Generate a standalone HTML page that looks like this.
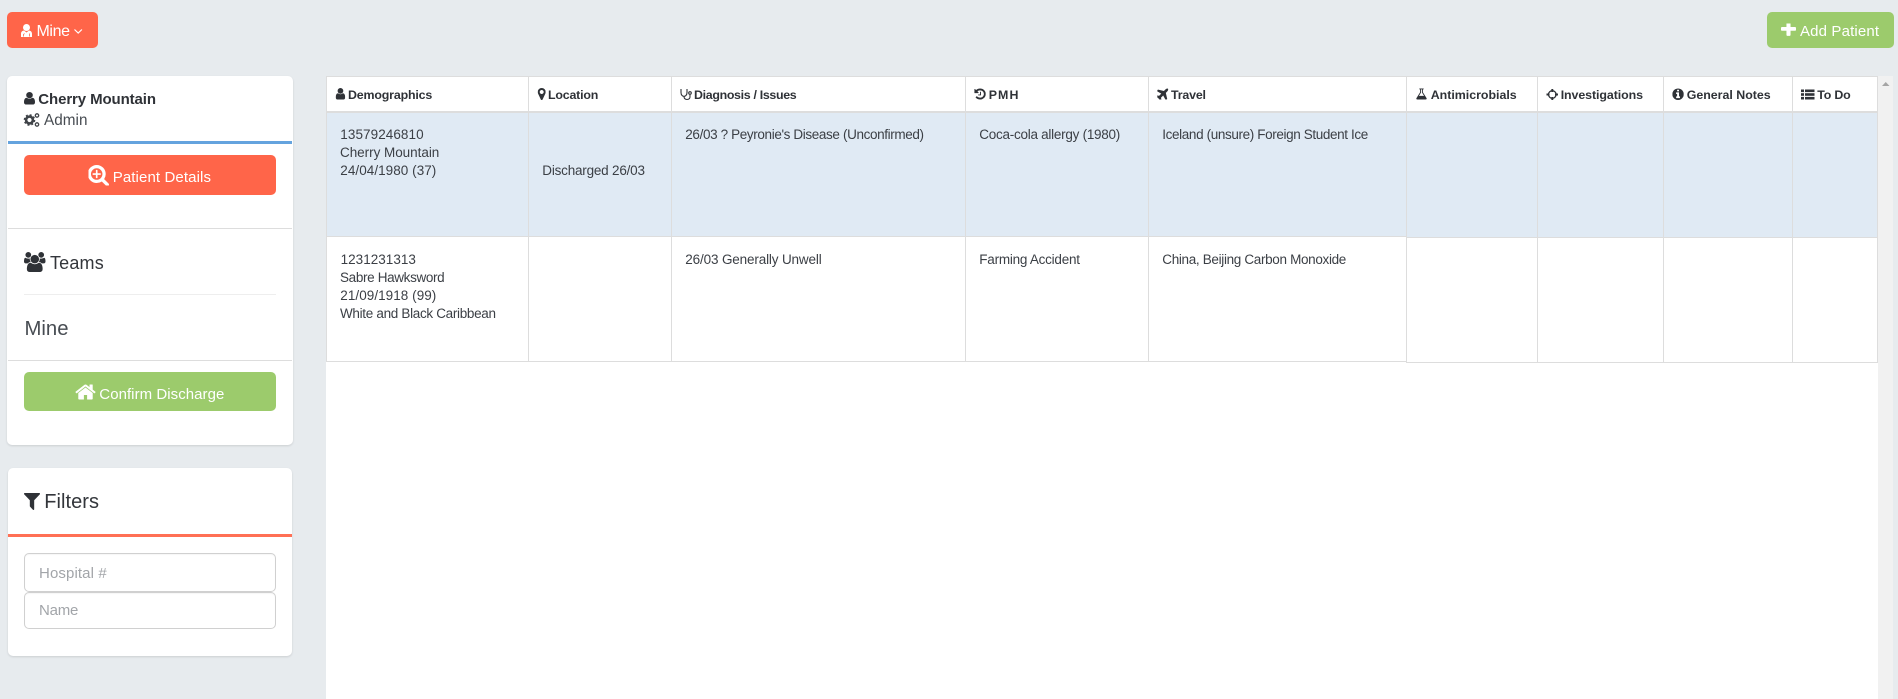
<!DOCTYPE html>
<html lang="en">
<head>
<meta charset="utf-8">
<title>Patient List</title>
<style>
html,body{margin:0;padding:0;width:1898px;height:699px;overflow:hidden;background:#e7ebee;font-family:"Liberation Sans",sans-serif}
.a{position:absolute}
.card{background:#fff;border-radius:5px;box-shadow:0 1px 2px rgba(0,0,0,.12)}
.btn{border-radius:5px}
.red{background:#ff6549}
.green{background:#9ccb6c}
.l{background:#ddd}
.inp{background:#fff;border:1px solid #d0d0d0;border-radius:5px;box-sizing:border-box;box-shadow:inset 0 1px 1px rgba(0,0,0,.04)}
svg.t{position:absolute;left:0;top:0}
text{font-family:"Liberation Sans",sans-serif}
.h{font-size:12.4px;font-weight:700;fill:#2f3237}
.b{font-size:13.5px;fill:#3b3f45}
.w{font-size:15px;fill:#fff}
.p{font-size:15px;fill:#a2a5a9}
.k{fill:#2f3237}
</style>
</head>
<body>
<!-- top buttons -->
<div class="a btn red" style="left:7px;top:12px;width:91px;height:36px"></div>
<div class="a btn green" style="left:1767px;top:12px;width:127px;height:36px"></div>

<!-- patient card -->
<div class="a card" style="left:7px;top:76px;width:286px;height:369px"></div>
<div class="a" style="left:8px;top:141px;width:284px;height:3px;background:#64a3de"></div>
<div class="a btn red" style="left:24px;top:155px;width:252px;height:40px"></div>
<div class="a l" style="left:8px;top:228px;width:284px;height:1px"></div>
<div class="a" style="left:24px;top:294px;width:252px;height:1px;background:#eee"></div>
<div class="a l" style="left:8px;top:360px;width:284px;height:1px"></div>
<div class="a btn green" style="left:24px;top:372px;width:252px;height:39px"></div>

<!-- filters card -->
<div class="a card" style="left:8px;top:468px;width:284px;height:188px"></div>
<div class="a" style="left:8px;top:534px;width:284px;height:3px;background:#ff7055"></div>
<div class="a inp" style="left:24px;top:553px;width:252px;height:39px"></div>
<div class="a inp" style="left:24px;top:592px;width:252px;height:36.500px"></div>

<!-- main panel + scrollbar -->
<div class="a" style="left:326px;top:76px;width:1552px;height:623px;background:#fff"></div>
<div class="a" style="left:1878px;top:76px;width:15px;height:623px;background:#f1f1f1"></div>

<!-- table rows -->
<div class="a" style="left:326px;top:113px;width:1080px;height:123px;background:#e0eaf4"></div>
<div class="a" style="left:1406px;top:113px;width:471px;height:124px;background:#e0eaf4"></div>
<!-- horizontal rules -->
<div class="a l" style="left:326px;top:76px;width:1552px;height:1px"></div>
<div class="a l" style="left:326px;top:111px;width:1552px;height:2px"></div>
<div class="a l" style="left:326px;top:236px;width:1080px;height:1px"></div>
<div class="a l" style="left:1406px;top:237px;width:472px;height:1px"></div>
<div class="a l" style="left:326px;top:361px;width:1080px;height:1px"></div>
<div class="a l" style="left:1406px;top:362px;width:472px;height:1px"></div>
<!-- vertical rules -->
<div class="a l" style="left:326px;top:76px;width:1px;height:286px"></div>
<div class="a l" style="left:528px;top:76px;width:1px;height:286px"></div>
<div class="a l" style="left:671px;top:76px;width:1px;height:286px"></div>
<div class="a l" style="left:965px;top:76px;width:1px;height:286px"></div>
<div class="a l" style="left:1148px;top:76px;width:1px;height:286px"></div>
<div class="a l" style="left:1406px;top:76px;width:1px;height:287px"></div>
<div class="a l" style="left:1537px;top:76px;width:1px;height:287px"></div>
<div class="a l" style="left:1663px;top:76px;width:1px;height:287px"></div>
<div class="a l" style="left:1792px;top:76px;width:1px;height:287px"></div>
<div class="a l" style="left:1877px;top:76px;width:1px;height:287px"></div>

<svg class="t" width="1898" height="699" viewBox="0 0 1898 699" xmlns="http://www.w3.org/2000/svg">
<!-- scrollbar arrow -->
<path d="M1882 86h7.5l-3.750-4z" fill="#a5a5a5"/>

<!-- Mine button -->
<g fill="#fff">
<circle cx="26.500" cy="27.500" r="3.500"/>
<path d="M21 37v-3.200c0-2 1.200-3 3-3.300l2.500 2 2.500-2c1.800.3 3 1.300 3 3.300V37z"/>
</g>
<path d="M23.500 36.500v-2l1-1M29.500 36.500v-3" stroke="#ff6549" stroke-width=".8" fill="none"/>
<text x="36.500" y="36" font-size="16" fill="#fff" textLength="33.500">Mine</text>
<path d="M74.500 29.500l3.700 3.500 3.700-3.500" fill="none" stroke="#fff" stroke-width="1.200"/>

<!-- Add Patient -->
<svg x="1781" y="23.500" width="15" height="13" viewBox="192 288 1408 1312" preserveAspectRatio="none"><path fill="#fff" d="M1600 736v192q0 40-28 68t-68 28h-416v416q0 40-28 68t-68 28h-192q-40 0-68-28t-28-68v-416h-416q-40 0-68-28t-28-68v-192q0-40 28-68t68-28h416v-416q0-40 28-68t68-28h192q40 0 68 28t28 68v416h416q40 0 68 28t28 68z"/></svg>
<text x="1800" y="36" class="w" textLength="79">Add Patient</text>

<!-- patient card -->
<svg x="24" y="92" width="11" height="12.500" viewBox="256 128 1280 1536" preserveAspectRatio="none"><path class="k" d="M1536 1399q0 109-62.500 187t-150.500 78h-854q-88 0-150.500-78t-62.500-187q0-85 8.500-160.500t31.500-152 58.500-131 94-89 134.500-34.500q131 128 313 128t313-128q76 0 134.500 34.500t94 89 58.500 131 31.500 152 8.500 160.500zm-256-887q0 159-112.500 271.500t-271.500 112.500-271.500-112.500-112.500-271.500 112.500-271.500 271.500-112.500 271.500 112.500 112.500 271.500z"/></svg>
<text x="38.300" y="104" font-size="15" font-weight="700" fill="#2f3237" textLength="117.700">Cherry Mountain</text>
<g fill="none" stroke="#3f4348">
<circle cx="29.500" cy="120" r="3.400" stroke-width="2.600"/>
<circle cx="29.500" cy="120" r="5" stroke-width="1.600" stroke-dasharray="2 1.930"/>
<circle cx="37" cy="115.500" r="1.700" stroke-width="1.300"/>
<circle cx="37" cy="124.500" r="1.700" stroke-width="1.300"/>
</g>
<text x="44" y="125" font-size="15.300" fill="#474c52" textLength="43.500">Admin</text>
<svg x="88.500" y="165" width="20.500" height="20.500" viewBox="128 128 1600 1600" preserveAspectRatio="none"><path fill="#fff" d="M1088 800v64q0 13-9.500 22.500t-22.500 9.500h-224v224q0 13-9.500 22.500t-22.500 9.500h-64q-13 0-22.500-9.500t-9.500-22.500v-224h-224q-13 0-22.500-9.500t-9.500-22.500v-64q0-13 9.500-22.500t22.500-9.500h224v-224q0-13 9.500-22.500t22.500-9.500h64q13 0 22.500 9.500t9.500 22.500v224h224q13 0 22.500 9.500t9.500 22.500zm128 32q0-185-131.500-316.500t-316.500-131.500-316.500 131.500-131.500 316.500 131.500 316.500 316.500 131.500 316.500-131.500 131.500-316.500zm512 832q0 53-37.500 90.500t-90.500 37.500q-54 0-90-38l-343-342q-179 124-399 124-143 0-273.500-55.500t-225-150-150-225-55.500-273.500 55.500-273.500 150-225 225-150 273.500-55.500 273.500 55.500 225 150 150 225 55.500 273.500q0 220-124 399l343 343q37 37 37 90z"/></svg>
<text x="112.700" y="182" class="w" font-size="15.200" textLength="98.300">Patient Details</text>

<svg x="24" y="252" width="21.500" height="20" viewBox="0 0 1920 1792" preserveAspectRatio="none"><path class="k" d="M593 896q-162 5-265 128h-134q-82 0-138-40.500t-56-118.500q0-353 124-353 6 0 43.500 21t97.500 42.500 119 21.500q67 0 133-23-5 37-5 66 0 139 81 256zm1071 637q0 120-73 189.500t-194 69.500h-874q-121 0-194-69.500t-73-189.500q0-53 3.500-103.500t14-109 26.500-108.500 43-97.500 62-81 85.500-53.500 111.500-20q10 0 43 21.500t73 48 107 48 135 21.500 135-21.500 107-48 73-48 43-21.500q61 0 111.500 20t85.500 53.500 62 81 43 97.500 26.500 108.500 14 109 3.500 103.500zm-1024-1277q0 106-75 181t-181 75-181-75-75-181 75-181 181-75 181 75 75 181zm704 384q0 159-112.500 271.500t-271.500 112.500-271.500-112.500-112.500-271.500 112.500-271.500 271.500-112.500 271.500 112.500 112.500 271.500zm576 225q0 78-56 118.500t-138 40.500h-134q-103-123-265-128 81-117 81-256 0-29-5-66 66 23 133 23 59 0 119-21.500t97.500-42.500 43.500-21q124 0 124 353zm-128-609q0 106-75 181t-181 75-181-75-75-181 75-181 181-75 181 75 75 181z"/></svg>
<text x="50" y="269" font-size="18" fill="#33363b" textLength="53.700">Teams</text>
<text x="24.500" y="335" font-size="20.300" fill="#474c52" textLength="44">Mine</text>

<svg x="75.500" y="383" width="20" height="16.500" viewBox="97 128 1598 1408" preserveAspectRatio="none"><path fill="#fff" d="M1472 992v480q0 26-19 45t-45 19h-384v-384h-256v384h-384q-26 0-45-19t-19-45v-480q0-1 .5-3t.5-3l575-474 575 474q1 2 1 6zm223-69l-62 74q-8 9-21 11h-3q-13 0-21-7l-692-577-692 577q-12 8-24 7-13-2-21-11l-62-74q-8-10-7-23.500t11-21.500l719-599q32-26 76-26t76 26l244 204v-195q0-14 9-23t23-9h192q14 0 23 9t9 23v408l219 182q10 8 11 21.500t-7 23.500z"/></svg>
<text x="99.300" y="399" class="w" textLength="125">Confirm Discharge</text>

<!-- filters -->
<svg x="24" y="493" width="16" height="17" viewBox="192 256 1408 1408" preserveAspectRatio="none"><path class="k" d="M1595 295q17 41-14 70l-493 493v742q0 42-39 59-13 5-25 5-27 0-45-19l-256-256q-19-19-19-45v-486l-493-493q-31-29-14-70 17-39 59-39h1280q42 0 59 39z"/></svg>
<text x="44.300" y="508" font-size="20" fill="#33363b" textLength="54.700">Filters</text>
<text x="39" y="578" class="p" textLength="67.700">Hospital #</text>
<text x="39" y="615" class="p" textLength="39.300">Name</text>

<!-- table headers -->
<svg x="335.700" y="88" width="9.500" height="11.500" viewBox="256 128 1280 1536" preserveAspectRatio="none"><path class="k" d="M1536 1399q0 109-62.500 187t-150.500 78h-854q-88 0-150.500-78t-62.500-187q0-85 8.500-160.500t31.500-152 58.500-131 94-89 134.500-34.500q131 128 313 128t313-128q76 0 134.500 34.500t94 89 58.500 131 31.500 152 8.500 160.500zm-256-887q0 159-112.500 271.500t-271.500 112.500-271.500-112.500-112.500-271.500 112.500-271.500 271.500-112.500 271.500 112.500 112.500 271.500z"/></svg>
<text x="348" y="99" class="h" textLength="84.300">Demographics</text>

<svg x="537.700" y="88" width="8" height="12" viewBox="384 128 1024 1536" preserveAspectRatio="none"><path class="k" d="M1152 640q0-106-75-181t-181-75-181 75-75 181 75 181 181 75 181-75 75-181zm256 0q0 109-33 179l-364 774q-16 33-47.500 52t-67.500 19-67.500-19-46.500-52l-365-774q-33-70-33-179 0-212 150-362t362-150 362 150 150 362z"/></svg>
<text x="548" y="99" class="h" textLength="50.300">Location</text>

<g fill="none" stroke="#2f3237" stroke-width="1.100">
<path d="M681 89v3.500c0 2.500 1.500 3.800 3 3.800s3-1.300 3-3.800V89"/>
<path d="M684 96.300c0 2.500 1.200 3.200 3 3.200s3-1 3-2.700v-2"/>
<circle cx="690" cy="93" r="1.300"/>
</g>
<text x="694" y="99" class="h" textLength="102.700">Diagnosis / Issues</text>

<svg x="974.300" y="88.500" width="11.500" height="11" viewBox="128 128 1536 1536" preserveAspectRatio="none"><path class="k" d="M1664 896q0 156-61 298t-164 245-245 164-298 61q-172 0-327-72.500t-264-204.500q-7-10-6.500-22.500t8.500-20.500l137-138q10-9 25-9 16 2 23 12 73 95 179 147t225 52q104 0 198.500-40.500t163.500-109.500 109.500-163.500 40.500-198.500-40.500-198.500-109.500-163.500-163.500-109.500-198.500-40.500q-98 0-188 35.500t-160 101.500l137 138q31 30 14 69-17 40-59 40h-448q-26 0-45-19t-19-45v-448q0-42 40-59 39-17 69 14l130 129q107-101 244.500-156.500t284.500-55.500q156 0 298 61t245 164 164 245 61 298zm-640-288v448q0 14-9 23t-23 9h-320q-14 0-23-9t-9-23v-64q0-14 9-23t23-9h224v-352q0-14 9-23t23-9h64q14 0 23 9t9 23z"/></svg>
<text x="988.700" y="99" class="h" textLength="29.700">PMH</text>

<svg x="1157.300" y="88.500" width="11" height="11" viewBox="128 128 1280 1280" preserveAspectRatio="none"><path class="k" d="M1376 160q44 52 12 148t-108 172l-161 161 160 696q5 19-12 33l-128 96q-7 6-19 6-4 0-7-1-15-3-21-16l-279-508-259 259 53 194q5 17-8 31l-96 96q-9 9-23 9h-2q-15-2-24-13l-189-252-252-189q-11-7-13-23-1-13 9-25l96-97q9-9 23-9 6 0 8 1l194 53 259-259-508-279q-14-8-17-24-2-16 9-27l128-128q14-13 30-8l665 159 160-160q76-76 172-108t148 12z"/></svg>
<text x="1171" y="99" class="h" textLength="35">Travel</text>

<svg x="1416" y="88.500" width="11" height="11" viewBox="128 128 1536 1536" preserveAspectRatio="none"><path class="k" d="M1591 1448q56 89 21.500 152.500t-140.500 63.500h-1152q-106 0-140.500-63.500t21.500-152.500l503-793v-399h-64q-26 0-45-19t-19-45 19-45 45-19h512q26 0 45 19t19 45-19 45-45 19h-64v399zm-779-725l-272 429h712l-272-429-20-31v-436h-128v436z"/></svg>
<text x="1430.700" y="99" class="h" textLength="86">Antimicrobials</text>

<g fill="none" stroke="#2f3237">
<circle cx="1552.300" cy="94.500" r="3.800" stroke-width="1.300"/>
<path d="M1552.300 89v3M1552.300 97v3M1546.500 94.500h3M1555 94.500h3" stroke-width="1.900"/>
</g>
<text x="1560.700" y="99" class="h" textLength="82.300">Investigations</text>

<svg x="1672.300" y="88.500" width="11.500" height="11.500" viewBox="128 128 1536 1536" preserveAspectRatio="none"><path class="k" d="M1152 1376v-160q0-14-9-23t-23-9h-96v-512q0-14-9-23t-23-9h-320q-14 0-23 9t-9 23v160q0 14 9 23t23 9h96v320h-96q-14 0-23 9t-9 23v160q0 14 9 23t23 9h448q14 0 23-9t9-23zm-128-896v-160q0-14-9-23t-23-9h-192q-14 0-23 9t-9 23v160q0 14 9 23t23 9h192q14 0 23-9t9-23zm640 416q0 209-103 385.500t-279.500 279.500-385.500 103-385.500-103-279.500-279.500-103-385.500 103-385.500 279.500-279.500 385.500-103 385.500 103 279.500 279.500 103 385.500z"/></svg>
<text x="1686.700" y="99" class="h" textLength="84">General Notes</text>

<g class="k">
<rect x="1801" y="89.500" width="3" height="2.600"/><rect x="1805" y="89.500" width="9.500" height="2.600"/>
<rect x="1801" y="93.200" width="3" height="2.600"/><rect x="1805" y="93.200" width="9.500" height="2.600"/>
<rect x="1801" y="96.900" width="3" height="2.600"/><rect x="1805" y="96.900" width="9.500" height="2.600"/>
</g>
<text x="1817.300" y="99" class="h" textLength="33.400">To Do</text>

<!-- row 1 -->
<text x="340.300" y="139" class="b" textLength="83.300">13579246810</text>
<text x="340" y="157" class="b" textLength="99.300">Cherry Mountain</text>
<text x="340.300" y="175" class="b" textLength="96">24/04/1980 (37)</text>
<text x="542.300" y="175" class="b" textLength="102.700">Discharged 26/03</text>
<text x="685.300" y="139" class="b" textLength="238.700">26/03 ? Peyronie's Disease (Unconfirmed)</text>
<text x="979.300" y="139" class="b" textLength="141">Coca-cola allergy (1980)</text>
<text x="1162.300" y="139" class="b" textLength="206">Iceland (unsure) Foreign Student Ice</text>

<!-- row 2 -->
<text x="340.600" y="264" class="b" textLength="75.300">1231231313</text>
<text x="340" y="282" class="b" textLength="104.700">Sabre Hawksword</text>
<text x="340.300" y="300" class="b" textLength="96">21/09/1918 (99)</text>
<text x="340" y="318" class="b" textLength="156">White and Black Caribbean</text>
<text x="685.300" y="264" class="b" textLength="136.400">26/03 Generally Unwell</text>
<text x="979.300" y="264" class="b" textLength="100.700">Farming Accident</text>
<text x="1162.300" y="264" class="b" textLength="184">China, Beijing Carbon Monoxide</text>
</svg>
</body>
</html>
